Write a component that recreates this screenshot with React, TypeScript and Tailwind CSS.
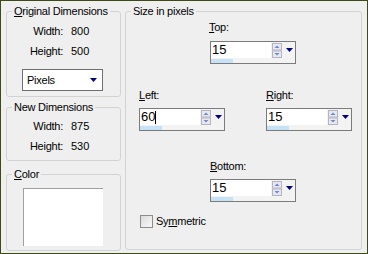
import type { ReactNode } from 'react'

// Sits inside the white entry area: small up/down buttons
function SpinButtons() {
  return (
    <svg width="10" height="15" viewBox="0 0 10 15" className="ml-[1px] mt-[1px] shrink-0">
      <rect x="0.5" y="0.5" width="9" height="6.5" fill="#e8e8ee" stroke="#b4b4c4" />
      <rect x="0.5" y="8" width="9" height="6.5" fill="#e8e8ee" stroke="#b4b4c4" />
      <polygon points="2.5,5 7.5,5 5,2.5" fill="#6a8ad8" />
      <polygon points="2.5,10 7.5,10 5,12.5" fill="#6a8ad8" />
    </svg>
  )
}

function DownArrow({ className = '' }: { className?: string }) {
  return (
    <svg width="7" height="4" viewBox="0 0 7 4" className={className}>
      <polygon points="0,0 7,0 3.5,4" fill="#000080" />
    </svg>
  )
}

function Spinner({ value, caret }: { value: string; caret?: boolean }) {
  return (
    <div className="w-[86px] h-[23px] border border-[#7b7b7b] bg-[#f3f3f3] flex flex-col">
      <div className="flex h-[16px]">
        <div className="w-[60px] h-[16px] bg-white pl-[1px] text-[13px] leading-[16px] flex items-center tracking-normal">
          {value}
          {caret && <span className="w-px h-[13px] bg-black" />}
        </div>
        <SpinButtons />
        <DownArrow className="ml-[4px] mt-[6px]" />
      </div>
      <div className="flex-1 flex items-center">
        <div className="w-[22px] h-[4px] bg-[#c6e2f7]" />
      </div>
    </div>
  )
}

function Group({ title, className = '', children }: { title: ReactNode; className?: string; children?: ReactNode }) {
  return (
    <fieldset className={`border border-[#d3d3cf] rounded-[3px] ${className}`}>
      <legend className="ml-[5px] px-[2px] leading-[13px]">{title}</legend>
      {children}
    </fieldset>
  )
}

function Stat({ label, value }: { label: string; value: string }) {
  return (
    <div className="grid grid-cols-[56px_auto] gap-x-[8px] h-[13px] leading-[13px]">
      <span className="text-right">{label}</span>
      <span className="tracking-normal">{value}</span>
    </div>
  )
}

export default function App() {
  return (
    <div className="w-[368px] h-[254px] bg-[#efefef] border border-[#3b4a16] flex gap-[4px] px-[5px] pt-[4px] font-['Liberation_Sans',Arial,sans-serif] text-[11px] tracking-[-0.25px] text-black">
      {/* left column */}
      <div className="w-[115px] flex flex-col">
        <Group
          title={<><span className="underline">O</span>riginal Dimensions</>}
          className="h-[92px] flex flex-col"
        >
          <div className="mt-[7px]">
            <Stat label="Width:" value="800" />
          </div>
          <div className="mt-[7px]">
            <Stat label="Height:" value="500" />
          </div>
          <div className="mt-[11px] ml-[15px] w-[81px] h-[22px] border border-[#6f6f6f] bg-white flex items-center pl-[4px] pr-[5px]">
            <span className="flex-1 text-[11px]">Pixels</span>
            <DownArrow />
          </div>
        </Group>

        <Group title="New Dimensions" className="mt-[4px] h-[60px]">
          <div className="mt-[6px]">
            <Stat label="Width:" value="875" />
          </div>
          <div className="mt-[7px]">
            <Stat label="Height:" value="530" />
          </div>
        </Group>

        <Group title={<><span className="underline">C</span>olor</>} className="mt-[7px] h-[83px]">
          <div className="mt-[7px] ml-[16px] w-[80px] h-[58px] bg-white border-t border-l border-[#a0a0a0]" />
        </Group>
      </div>

      {/* size in pixels */}
      <Group title="Size in pixels" className="w-[237px] h-[245px] flex flex-col">
        <div className="ml-[83px] mt-[3px] leading-[13px]">
          <span className="underline">T</span>op:
        </div>
        <div className="ml-[84px] mt-[7px]">
          <Spinner value="15" />
        </div>

        <div className="flex mt-[25px] ml-[13px] gap-[40px]">
          <div className="flex flex-col gap-[6px]">
            <div className="leading-[13px]">
              <span className="underline">L</span>eft:
            </div>
            <Spinner value="60" caret />
          </div>
          <div className="flex flex-col gap-[6px] ml-[1px]">
            <div className="leading-[13px]">
              <span className="underline">R</span>ight:
            </div>
            <Spinner value="15" />
          </div>
        </div>

        <div className="ml-[84px] mt-[29px] leading-[13px]">
          <span className="underline">B</span>ottom:
        </div>
        <div className="ml-[84px] mt-[6px]">
          <Spinner value="15" />
        </div>

        <label className="flex items-center ml-[14px] mt-[13px] gap-[3px]">
          <span className="w-[13px] h-[13px] border border-[#8c8c8c] bg-gradient-to-br from-[#dcdcdc] to-[#f8f8f8]" />
          <span className="leading-[13px]">
            Sy<span className="underline">m</span>metric
          </span>
        </label>
      </Group>
    </div>
  )
}
